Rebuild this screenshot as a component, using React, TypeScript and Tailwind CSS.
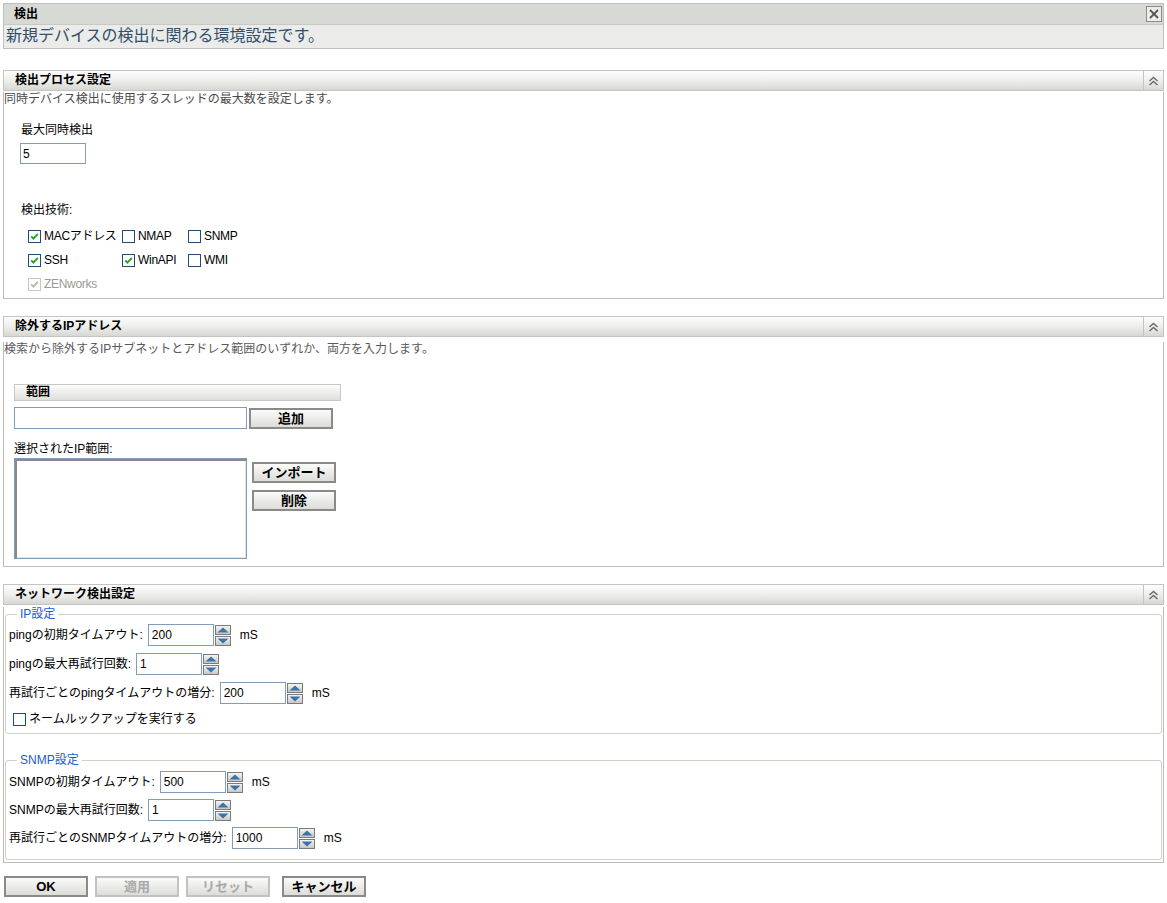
import React from "react";

const FONT = { fontFamily: '"Liberation Sans", "Noto Sans CJK JP", sans-serif' };

function DoubleUp() {
  return (
    <svg width="11" height="10" viewBox="0 0 11 10">
      <path d="M1.5 5 L5.5 1.5 L9.5 5" stroke="#6a6a6a" strokeWidth="1.4" fill="none" />
      <path d="M1.5 9 L5.5 5.5 L9.5 9" stroke="#6a6a6a" strokeWidth="1.4" fill="none" />
    </svg>
  );
}

function PanelHeader({ title }: { title: string }) {
  return (
    <div className="flex h-[21px] border border-[#c4c4c0] bg-gradient-to-b from-[#fdfdfd] via-[#eeeeec] to-[#d7d8d3]">
      <div className="flex-1 pl-[11px] text-[12px] font-bold leading-[19px] text-black">{title}</div>
      <div className="flex w-[20px] items-center justify-center border-l border-[#c4c4c0]">
        <DoubleUp />
      </div>
    </div>
  );
}

function Check({ checked, disabled }: { checked?: boolean; disabled?: boolean }) {
  return (
    <span
      className={`inline-flex h-[13px] w-[13px] shrink-0 items-center justify-center border bg-white ${
        disabled ? "border-[#c8c8c0]" : "border-[#1d4d78]"
      }`}
    >
      {checked && (
        <svg width="9" height="9" viewBox="0 0 9 9">
          <path
            d="M1.2 4.4 L3.4 6.6 L7.8 1.8"
            stroke={disabled ? "#b9b9b1" : "#22a322"}
            strokeWidth="1.9"
            fill="none"
          />
        </svg>
      )}
    </span>
  );
}

function CheckItem({ label, checked, disabled }: { label: string; checked?: boolean; disabled?: boolean }) {
  return (
    <div className="flex h-[16px] items-center gap-[3px]">
      <Check checked={checked} disabled={disabled} />
      <span
        className={`whitespace-nowrap text-[12px] leading-[14px] tracking-[-0.3px] ${
          disabled ? "text-[#9a9a94]" : "text-black"
        }`}
      >
        {label}
      </span>
    </div>
  );
}

function Btn({ label, disabled, w = "w-[84px]" }: { label: string; disabled?: boolean; w?: string }) {
  return (
    <div
      className={`flex h-[21px] items-center justify-center border-2 bg-gradient-to-b from-[#fbfbfb] to-[#dcdcd8] text-[13px] font-bold leading-none ${w} ${
        disabled ? "border-[#c2c2c0] text-[#a9a9a6]" : "border-[#8a8a88] text-black"
      }`}
    >
      {label}
    </div>
  );
}

function SpinBtn({ up }: { up?: boolean }) {
  return (
    <div className="flex h-[10px] w-[16px] items-center justify-center border border-[#7a7a78] bg-gradient-to-b from-[#f4f4f2] to-[#c9c9c4]">
      <svg width="12" height="6" viewBox="0 0 12 6">
        {up ? <path d="M0.5 5.5 L6 0.5 L11.5 5.5 Z" fill="#3f72ab" /> : <path d="M0.5 0.5 L6 5.5 L11.5 0.5 Z" fill="#3f72ab" />}
      </svg>
    </div>
  );
}

function NumField({ label, value, unit }: { label: string; value: string; unit?: boolean }) {
  return (
    <div className="flex h-[22px] items-center">
      <span className="text-[12px] leading-[14px] text-black">{label}</span>
      <div className="ml-[5px] flex h-[22px] w-[66px] items-center border border-[#7f9db9] bg-white pl-[3px] text-[12px] text-black">
        {value}
      </div>
      <div className="ml-[1px] flex flex-col gap-[1px]">
        <SpinBtn up />
        <SpinBtn />
      </div>
      {unit && <span className="ml-[9px] text-[12px] text-black">mS</span>}
    </div>
  );
}

export default function App() {
  return (
    <div className="min-h-[903px] w-full bg-white px-[3px] pt-[3px] text-[12px] text-black" style={FONT}>
      {/* Top panel */}
      <div className="border border-[#c0c0bc]">
        <div className="flex h-[20px] items-center justify-between bg-[#d7d9d4] pl-[10px] pr-[1px]">
          <span className="text-[12px] font-bold text-black">検出</span>
          <div className="flex h-[16px] w-[16px] items-center justify-center border border-[#8c8c8a] bg-[#ecece9]">
            <svg width="10" height="10" viewBox="0 0 10 10">
              <path d="M1 1 L9 9 M9 1 L1 9" stroke="#555" strokeWidth="1.8" />
            </svg>
          </div>
        </div>
        <div className="h-[24px] border-t border-[#c8c8c4] bg-[#ebebe9] pl-[2px] text-[16px] leading-[22px] text-[#2f506b]">
          新規デバイスの検出に関わる環境設定です。
        </div>
      </div>

      {/* Panel 1 */}
      <div className="mt-[21px]">
        <PanelHeader title="検出プロセス設定" />
        <div className="border-x border-b border-[#bdbdb8] pb-[6px]">
          <div className="mt-[1px] text-[12px] leading-[14px] text-[#4a4a4a]">同時デバイス検出に使用するスレッドの最大数を設定します。</div>
          <div className="ml-[17px] mt-[17px] text-[12px] leading-[14px]">最大同時検出</div>
          <div className="ml-[16px] mt-[6px] flex h-[21px] w-[66px] items-center border border-[#7f9db9] pl-[2px] text-[12px]">5</div>
          <div className="ml-[17px] mt-[39px] text-[12px] leading-[14px]">検出技術:</div>
          <div className="ml-[24px] mt-[11px] grid grid-cols-[94px_66px_80px] gap-y-[8px]">
            <CheckItem label="MACアドレス" checked />
            <CheckItem label="NMAP" />
            <CheckItem label="SNMP" />
            <CheckItem label="SSH" checked />
            <CheckItem label="WinAPI" checked />
            <CheckItem label="WMI" />
            <CheckItem label="ZENworks" checked disabled />
          </div>
        </div>
      </div>

      {/* Panel 2 */}
      <div className="mt-[17px]">
        <PanelHeader title="除外するIPアドレス" />
        <div className="border-x border-b border-[#bdbdb8] pb-[7px]">
          <div className="mt-[5px] text-[12px] leading-[14px] text-[#5a5a5a]">
            検索から除外するIPサブネットとアドレス範囲のいずれか、両方を入力します。
          </div>
          <div className="ml-[10px] mt-[28px] h-[17px] w-[327px] border border-[#c8c8c4] bg-gradient-to-b from-[#fdfdfd] to-[#dedfda] pl-[11px] text-[12px] font-bold leading-[15px]">
            範囲
          </div>
          <div className="ml-[10px] mt-[6px] flex items-center gap-[2px]">
            <div className="h-[22px] w-[233px] border border-[#7f9db9] bg-white" />
            <Btn label="追加" />
          </div>
          <div className="ml-[10px] mt-[13px] text-[12px] leading-[14px]">選択されたIP範囲:</div>
          <div className="ml-[10px] mt-[2px] flex items-start gap-[5px]">
            <div className="h-[101px] w-[233px] border border-[#7f9db9] bg-white shadow-[inset_2px_2px_0_#8a8a8a,inset_-1px_-1px_0_#e4e4e0]" />
            <div className="mt-[4px] flex flex-col gap-[7px]">
              <Btn label="インポート" />
              <Btn label="削除" />
            </div>
          </div>
        </div>
      </div>

      {/* Panel 3 */}
      <div className="mt-[17px]">
        <PanelHeader title="ネットワーク検出設定" />
        <div className="border-x border-b border-[#bdbdb8] px-[1px] pb-[2px]">
          <fieldset className="mt-[2px] rounded-[3px] border border-[#d0d0c4] px-[3px] pb-[7px]">
            <legend className="ml-[8px] px-[3px] text-[12px] leading-[14px] text-[#1c5ccc]">IP設定</legend>
            <div className="mt-[3px] flex flex-col gap-[7px]">
              <NumField label="pingの初期タイムアウト:" value="200" unit />
              <NumField label="pingの最大再試行回数:" value="1" />
              <NumField label="再試行ごとのpingタイムアウトの増分:" value="200" unit />
            </div>
            <div className="ml-[4px] mt-[8px] flex items-center gap-[3px]">
              <Check />
              <span className="text-[12px] leading-[14px]">ネームルックアップを実行する</span>
            </div>
          </fieldset>
          <fieldset className="mt-[19px] rounded-[3px] border border-[#d0d0c4] px-[3px] pb-[10px]">
            <legend className="ml-[8px] px-[3px] text-[12px] leading-[14px] text-[#1c5ccc]">SNMP設定</legend>
            <div className="mt-[4px] flex flex-col gap-[6px]">
              <NumField label="SNMPの初期タイムアウト:" value="500" unit />
              <NumField label="SNMPの最大再試行回数:" value="1" />
              <NumField label="再試行ごとのSNMPタイムアウトの増分:" value="1000" unit />
            </div>
          </fieldset>
        </div>
      </div>

      {/* Bottom buttons */}
      <div className="mt-[13px] flex items-center pl-[1px]">
        <Btn label="OK" />
        <div className="ml-[7px]">
          <Btn label="適用" disabled />
        </div>
        <div className="ml-[7px]">
          <Btn label="リセット" disabled />
        </div>
        <div className="ml-[12px]">
          <Btn label="キャンセル" />
        </div>
      </div>
    </div>
  );
}
